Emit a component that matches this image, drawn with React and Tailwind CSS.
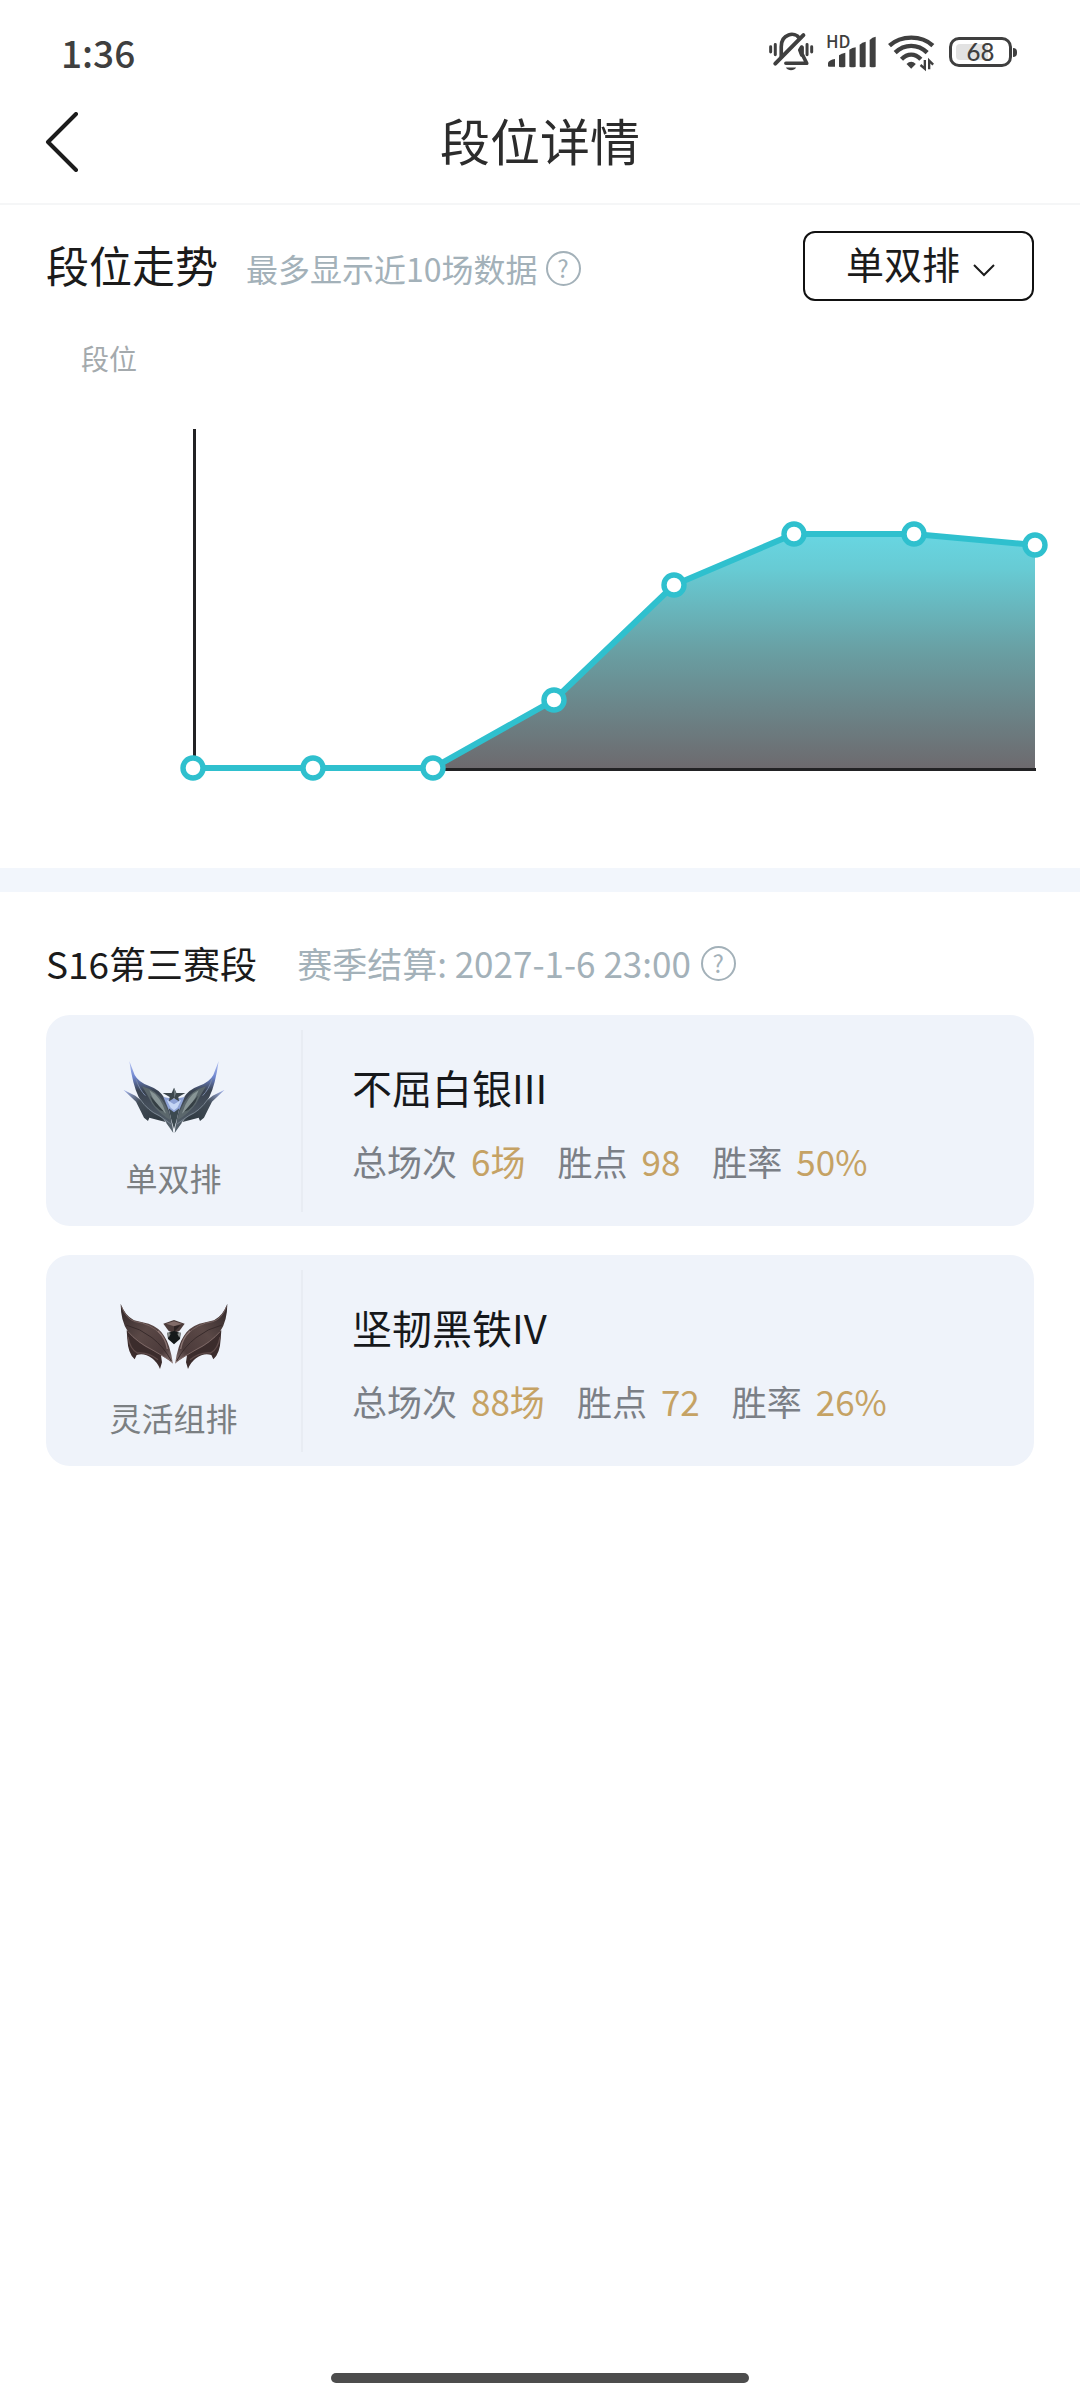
import { useState } from 'react';

const MuteIcon = () => (
    <svg viewBox="86 68 136 120" className="w-[45px] h-10" fill="none" stroke="#3f3f3f" strokeWidth="9" strokeLinecap="round" strokeLinejoin="round" aria-hidden="true">
        <path d="M91 112V128M105 105V136M201 105V136M215 112V128" />
        <path d="M123 142V112C123 72 164 66 178 86" strokeWidth="11" />
        <path d="M105 163L190 77" strokeWidth="12" />
        <path d="M186 114V134L200 162H137" strokeWidth="11" />
        <path d="M184 112L178 122L184 138Z" fill="#3f3f3f" />
        <path d="M137 175H168C162 186 143 186 137 175Z" fill="#3f3f3f" stroke="none" />
    </svg>
);

const SignalIcon = () => (
    <div className="relative">
        <svg viewBox="255 68 150 120" className="w-[50px] h-10" fill="#3f3f3f" aria-hidden="true">
            <path d="M261 170V160Q264 152 282 149V172H264Q261 172 261 170Z" />
            <path d="M294 138Q302 132 313 130V172Q304 175 294 172Z" />
            <path d="M325 121Q334 115 344 114V172Q334 175 325 172Z" />
            <path d="M356 106Q364 99 374 97V172Q365 175 356 172Z" />
            <path d="M386 92Q394 83 404 82V172Q395 175 386 172Z" />
        </svg>
        <span className="absolute left-0 top-0 text-[17px] leading-none font-medium">HD</span>
    </div>
);

const WifiIcon = () => (
    <svg viewBox="443 68 140 120" className="w-[47px] h-10" fill="none" stroke="#3f3f3f" strokeWidth="13" aria-hidden="true">
        <path d="M447 109C482 77 543 77 577 109" />
        <path d="M464 130C492 103 532 103 560 130" />
        <path d="M483 150C501 131 523 131 541 150" />
        <path d="M498 164Q512 150 526 164L512 178Z" fill="#3f3f3f" stroke="none" />
        <path d="M553 152V178L540 167M566 180V154L578 166" strokeWidth="7" />
    </svg>
);

const StatusBar = () => (
    <div className="flex items-center justify-between h-[104px] pl-[61px] pr-[63px] text-[#3f3f3f]">
        <span className="text-[37px] leading-none font-medium">1:36</span>
        <div className="flex items-center gap-3">
            <MuteIcon />
            <SignalIcon />
            <WifiIcon />
            <div className="flex items-center gap-px ml-0.5">
                <div className="w-[63px] h-[30px] p-1 rounded-[10px] border-[3px] border-[#3f3f3f]">
                    <div className="flex items-center justify-center h-full rounded bg-[linear-gradient(90deg,#e2e2e2_66%,#fff_66%)] font-[Lato] text-[24px] leading-none font-medium">
                        68
                    </div>
                </div>
                <div className="w-1 h-[9px] rounded-r-sm bg-[#3f3f3f]" />
            </div>
        </div>
    </div>
);

const HelpButton = ({ label }) => (
    <button aria-label={label} className="flex items-center justify-center shrink-0 w-[35px] h-[35px] rounded-full border-2 border-[#a3b1b9] text-[#a3b1b9] text-2xl leading-none">
        ?
    </button>
);

// one entry for each match, in chart units
const points = [
    [193, 768],
    [313, 768],
    [433, 768],
    [554, 700],
    [674, 585],
    [794, 534],
    [914, 534],
    [1035, 545],
];

const RankChart = () => {
    const line = points.map((p) => p.join(',')).join(' ');

    return (
        <svg viewBox="0 420 1080 370" className="block w-full h-auto" role="img" aria-label="段位走势">
            <defs>
                <linearGradient id="area" x1="0" y1="534" x2="0" y2="768" gradientUnits="userSpaceOnUse">
                    <stop offset="0" stopColor="#68d6e2" />
                    <stop offset="0.15" stopColor="#67cbd4" />
                    <stop offset="0.5" stopColor="#699fa3" />
                    <stop offset="1" stopColor="#6d6a6e" />
                </linearGradient>
            </defs>
            <polygon points={`${line} 1035,768 193,768`} fill="url(#area)" />
            <path d="M194.5 429V769.5H1036" fill="none" stroke="#222224" strokeWidth="3" />
            <polyline points={line} fill="none" stroke="#2fc0ce" strokeWidth="6" />
            {points.map(([x, y]) => (
                <circle key={x} cx={x} cy={y} r="10" fill="#fff" stroke="#2fc0ce" strokeWidth="5.4" />
            ))}
        </svg>
    );
};

const SilverEmblem = () => (
    <svg viewBox="56 80 336 240" className="w-28 h-20" aria-hidden="true">
        <defs>
            <linearGradient id="silverTip" x1="0" y1="0" x2="0" y2="1">
                <stop offset="0" stopColor="#b9c6f6" />
                <stop offset="0.22" stopColor="#6f86cf" />
                <stop offset="0.42" stopColor="#39424f" />
                <stop offset="1" stopColor="#59656f" />
            </linearGradient>
            <linearGradient id="silverWing" x1="0" y1="0" x2="1" y2="1">
                <stop offset="0" stopColor="#a9baf4" />
                <stop offset="0.3" stopColor="#434d58" />
                <stop offset="0.7" stopColor="#303a42" />
                <stop offset="1" stopColor="#6b7880" />
            </linearGradient>
            <g id="silverHalf">
                <path d="M72 178L108 196L140 222L184 254L222 308L218 280L150 262L146 272L134 262L124 242L110 214Z" fill="url(#silverWing)" />
                <path d="M90 92L106 134Q118 156 148 166Q182 178 196 204Q212 232 221 306Q206 272 176 256Q138 238 118 200Q100 164 90 92Z" fill="url(#silverTip)" />
                <path d="M128 168Q172 180 192 214Q208 240 214 270Q178 248 158 220Q146 196 128 168Z" fill="#5b676c" />
                <path d="M150 180Q184 196 200 250Q166 224 150 180Z" fill="#889596" />
                <path d="M152 196Q170 216 194 244Q164 236 152 196Z" fill="#353f44" />
                <path d="M122 206Q146 242 180 256L216 282" fill="none" stroke="#77838f" strokeWidth="3" />
                <path d="M110 146Q120 178 138 196" fill="none" stroke="#7887a6" strokeWidth="3" />
            </g>
        </defs>
        <use href="#silverHalf" />
        <use href="#silverHalf" transform="translate(448 0) scale(-1 1)" />
        <path d="M192 200L224 206L256 200L240 238L224 256L208 238Z" fill="#8fa3d6" />
        <path d="M202 208L224 222L246 208L234 232L224 240L214 232Z" fill="#c6d6f5" />
        <path d="M208 234L224 246L240 234L232 268L224 296L216 268Z" fill="#3c4950" />
        <path d="M224 172L231 188L258 188L237 200L239 213L224 204L209 213L211 200L190 188L217 188Z" fill="#3d474d" />
        <path d="M224 172V204L231 188Z" fill="#6b777c" />
    </svg>
);

const IronEmblem = () => (
    <svg viewBox="56 80 336 240" className="w-28 h-20" aria-hidden="true">
        <defs>
            <linearGradient id="ironWing" x1="0" y1="0" x2="1" y2="1">
                <stop offset="0" stopColor="#2f2628" />
                <stop offset="0.45" stopColor="#5a4846" />
                <stop offset="0.8" stopColor="#4c3b3b" />
                <stop offset="1" stopColor="#8f7b79" />
            </linearGradient>
            <g id="ironHalf">
                <path d="M82 180L84 206Q86 250 106 267L112 254Q134 246 158 264Q174 276 182 296L188 276L184 248Z" fill="#3b2c2c" />
                <path d="M86 200Q92 236 114 248Q146 244 176 268" fill="none" stroke="#5e4a49" strokeWidth="4" />
                <path d="M64 100Q76 134 104 150Q126 156 148 160Q180 172 194 196Q212 222 221 280Q190 254 158 240Q114 218 86 184Q64 152 64 100Z" fill="url(#ironWing)" />
                <path d="M66 108Q80 146 108 154Q154 160 184 192" fill="none" stroke="#75615f" strokeWidth="3" />
                <path d="M80 164Q122 174 158 202Q194 230 216 272" fill="none" stroke="#382b2b" strokeWidth="3" />
                <path d="M86 184Q114 216 158 238L212 270" fill="none" stroke="#7b6664" strokeWidth="3" />
                <path d="M176 182Q200 206 204 236" fill="none" stroke="#8a7472" strokeWidth="4" />
            </g>
        </defs>
        <use href="#ironHalf" />
        <use href="#ironHalf" transform="translate(448 0) scale(-1 1)" />
        <path d="M192 160L224 149L256 160L240 182L224 188L208 182Z" fill="#4c3c3b" />
        <path d="M200 160L224 153L248 160L224 168Z" fill="#826c69" />
        <path d="M224 168L244 164L224 186Z" fill="#2d2323" />
        <path d="M204 188L224 182L244 188L242 206L224 222L206 206Z" fill="#15191a" />
        <path d="M203 186L214 190L208 202Z" fill="#8a8e8c" />
        <path d="M245 186L234 190L240 202Z" fill="#8a8e8c" />
    </svg>
);

const ranks = [
    { queue: '单双排', Emblem: SilverEmblem, tier: '不屈白银III', games: '6场', lp: '98', rate: '50%' },
    { queue: '灵活组排', Emblem: IronEmblem, tier: '坚韧黑铁IV', games: '88场', lp: '72', rate: '26%' },
];

const Stat = ({ name, value }) => (
    <div className="flex gap-[14px]">
        <dt className="text-[#7b7f86]">{name}</dt>
        <dd className="text-[#c5a264]">{value}</dd>
    </div>
);

const RankCard = ({ queue, Emblem, tier, games, lp, rate }) => (
    <li className="flex items-center h-[211px] rounded-3xl bg-[#eff3fa]">
        <div className="flex flex-col items-center w-[255px] pt-4">
            <Emblem />
            <span className="mt-4 text-[32px] leading-[48px] text-[#7b7f82]">{queue}</span>
        </div>
        <div className="w-0.5 h-[182px] bg-[#e8ecf3]" />
        <div className="flex-1 pt-1 pl-[49px]">
            <h3 className="text-[40px] leading-[56px] text-[#16181b]">{tier}</h3>
            <dl className="flex gap-8 mt-5 text-[35px] leading-[52px]">
                <Stat name="总场次" value={games} />
                <Stat name="胜点" value={lp} />
                <Stat name="胜率" value={rate} />
            </dl>
        </div>
    </li>
);

const App = () => {
    const [queue, setQueue] = useState('单双排');

    return (
        <div className="flex flex-col min-h-screen bg-white font-['Noto_Sans_CJK_SC',sans-serif]">
            <StatusBar />

            <header className="grid grid-cols-[1fr_auto_1fr] items-start h-[101px] px-[45px] border-b-2 border-[#f5f6f7]">
                <button aria-label="返回" className="justify-self-start pt-2">
                    <svg viewBox="0 0 34 60" className="w-[34px] h-[60px]" fill="none" stroke="#1c1c1c" strokeWidth="4" strokeLinecap="round" strokeLinejoin="round">
                        <path d="M31 2L3 30L31 58" />
                    </svg>
                </button>
                <h1 className="text-[50px] leading-[70px] text-[#2c2c2c]">段位详情</h1>
            </header>

            <section className="pb-[78px]">
                <div className="flex items-center justify-between pt-[26px] px-[46px]">
                    <div className="flex items-center">
                        <h2 className="text-[43px] leading-[60px] pb-1 text-[#1b1b1b]">段位走势</h2>
                        <p className="ml-7 mt-1 mr-2 text-[32px] leading-[48px] text-[#a3b1b9]">最多显示近10场数据</p>
                        <div className="pt-1">
                            <HelpButton label="数据说明" />
                        </div>
                    </div>
                    <div className="relative">
                        <select
                            aria-label="排位类型"
                            value={queue}
                            onChange={(e) => setQueue(e.target.value)}
                            className="block appearance-none w-[231px] h-[70px] pl-[41px] pb-1.5 rounded-xl border-2 border-[#111] bg-white text-[38px] leading-[56px] text-[#1b1b1b]"
                        >
                            <option>单双排</option>
                            <option>灵活组排</option>
                        </select>
                        <svg viewBox="0 0 22 13" className="absolute right-[39px] top-[33px] w-[22px] h-[13px] pointer-events-none" fill="none" stroke="#1b1b1b" strokeWidth="2">
                            <path d="M1 1L11 11L21 1" />
                        </svg>
                    </div>
                </div>
                <p className="mt-9 mb-[41px] pl-[81px] text-[28px] leading-[42px] text-[#a4aaad]">段位</p>
                <RankChart />
            </section>

            <div className="h-6 bg-[#f2f6fc]" />

            <section className="px-[46px] pt-[43px]">
                <div className="flex items-center">
                    <h2 className="text-[37px] leading-[56px] text-[#1b1b1b]">S16第三赛段</h2>
                    <p className="ml-10 mr-2.5 text-[35px] leading-[56px] text-[#a3b1b9]">赛季结算: 2027-1-6 23:00</p>
                    <HelpButton label="结算说明" />
                </div>
                <ul className="flex flex-col gap-[29px] mt-6">
                    {ranks.map((rank) => (
                        <RankCard key={rank.queue} {...rank} />
                    ))}
                </ul>
            </section>

            <div className="self-center w-[418px] h-[10px] mt-auto mb-[17px] rounded-full bg-[#4d4d4d]" />
        </div>
    );
};

export default App;
